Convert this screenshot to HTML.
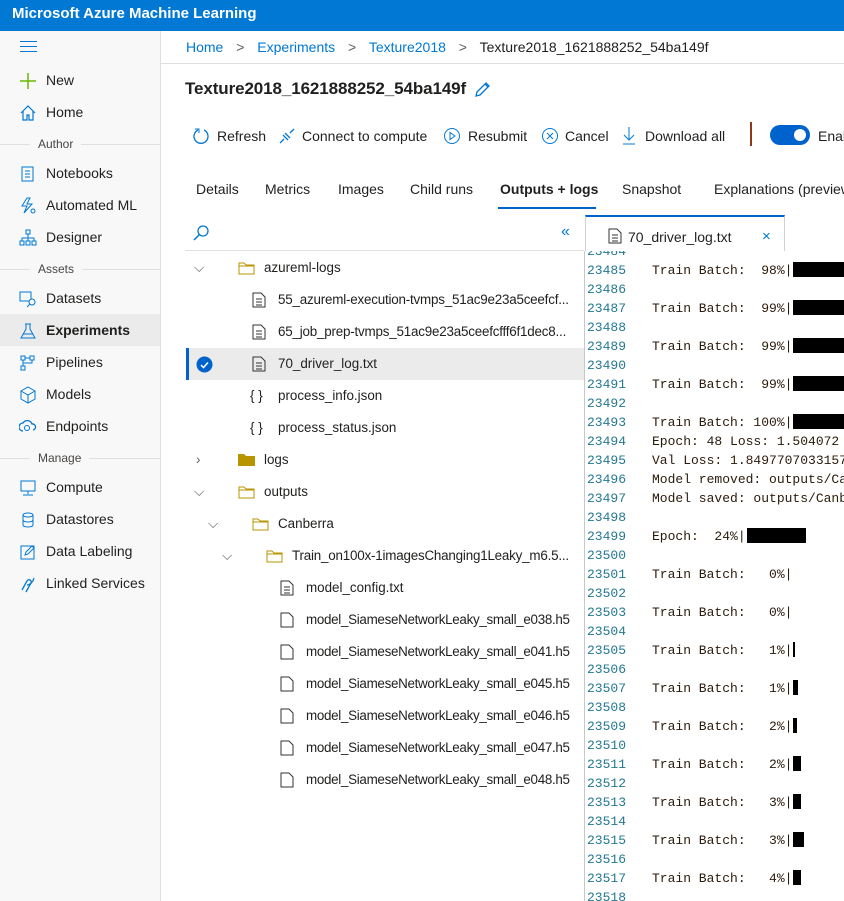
<!DOCTYPE html>
<html><head><meta charset="utf-8"><style>
*{margin:0;padding:0;box-sizing:border-box}
body{width:844px;height:901px;overflow:hidden;background:#fff;font-family:"Liberation Sans",sans-serif;font-size:14px;color:#201f1e;position:relative}
.a{position:absolute;white-space:nowrap}
.top{left:0;top:0;width:844px;height:31px;background:#0078d4;color:#fff;font-size:15px;padding:5px 12px;font-weight:bold}
.side{left:0;top:31px;width:161px;height:870px;background:#f8f8f8;border-right:1px solid #e1dfdd}
.si{left:0;width:160px;height:32px;line-height:32px;padding-left:46px}
.si svg{position:absolute;left:19px;top:8px}
.hd{left:0;width:160px;font-size:12px;color:#484644;display:flex;align-items:center;height:14px}
.hd i{flex:1;height:1px;background:#e1dfdd}
.hd span{padding:0 8px}
.tb{top:126px;height:20px;line-height:20px}
.tr{left:186px;width:398px;height:32px;line-height:32px;overflow:hidden;font-size:13.4px}
.code{left:584px;top:251px;width:260px;height:650px;overflow:hidden;border-left:1px solid #c8c8c8;font-family:"Liberation Mono",monospace;font-size:13px}
.ln{position:absolute;left:2px;height:19px;line-height:19px;color:#237893}
.tx{position:absolute;left:67px;height:19px;line-height:19px;color:#2a1a0a;white-space:pre}
.bar{display:inline-block;background:#000;height:15px;vertical-align:-3px;margin-left:1px}
</style></head><body>
<div class="a top">Microsoft Azure Machine Learning</div>
<div class="a side"></div>
<div class="a" style="left:20px;top:41px;width:17px;height:1px;background:#0078d4;box-shadow:0 5px 0 #0078d4,0 10px 0 #0078d4"></div>
<div class="a si" style="top:64px"><svg width="18" height="18"><path d="M9 1v16M1 9h16" stroke="#6bb700" stroke-width="1.5"/></svg>New</div>
<div class="a si" style="top:96px"><svg width="18" height="18"><path d="M2 9L9 2l7 7M4 7v9h4v-5h2v5h4V7" stroke="#0078d4" fill="none" stroke-width="1.2"/></svg>Home</div>
<div class="a hd" style="top:137px"><i style="flex:0 0 30px"></i><span>Author</span><i></i></div>
<div class="a si" style="top:157px"><svg width="18" height="18"><rect x="3" y="2" width="11" height="14" stroke="#0078d4" fill="none"/><path d="M6 6h5M6 9h5M6 12h5" stroke="#0078d4"/></svg>Notebooks</div>
<div class="a si" style="top:189px"><svg width="18" height="18"><path d="M8 1L3 9h5l-3 7 8-9H8l3-6z" stroke="#0078d4" fill="none"/><circle cx="14" cy="14" r="2" stroke="#0078d4" fill="none"/></svg>Automated ML</div>
<div class="a si" style="top:221px"><svg width="18" height="18"><rect x="7" y="1" width="4" height="4" stroke="#0078d4" fill="none"/><rect x="1" y="12" width="4" height="4" stroke="#0078d4" fill="none"/><rect x="7" y="12" width="4" height="4" stroke="#0078d4" fill="none"/><rect x="13" y="12" width="4" height="4" stroke="#0078d4" fill="none"/><path d="M9 5v7M3 12V9h12v3" stroke="#0078d4" fill="none"/></svg>Designer</div>
<div class="a hd" style="top:262px"><i style="flex:0 0 30px"></i><span>Assets</span><i></i></div>
<div class="a si" style="top:282px"><svg width="18" height="18"><rect x="1" y="2" width="11" height="9" stroke="#0078d4" fill="none"/><circle cx="13" cy="12" r="3" stroke="#0078d4" fill="#f8f8f8"/><path d="M11 14l-3 3" stroke="#0078d4"/></svg>Datasets</div>
<div class="a" style="left:0;top:314px;width:160px;height:32px;background:#ebebeb"></div>
<div class="a si" style="top:314px;font-weight:bold;color:#201f1e"><svg width="18" height="18"><path d="M6 2h6M7 2v5L2 16h14L11 7V2" stroke="#0078d4" fill="none"/><path d="M4 12h10" stroke="#0078d4"/></svg>Experiments</div>
<div class="a si" style="top:346px"><svg width="18" height="18"><rect x="2" y="2" width="4" height="4" stroke="#0078d4" fill="none"/><rect x="11" y="2" width="4" height="4" stroke="#0078d4" fill="none"/><rect x="2" y="12" width="4" height="4" stroke="#0078d4" fill="none"/><path d="M4 6v6M6 4h5M13 6v3H4" stroke="#0078d4" fill="none"/></svg>Pipelines</div>
<div class="a si" style="top:378px"><svg width="18" height="18"><path d="M9 1l7 4v8l-7 4-7-4V5zM2 5l7 4 7-4M9 9v8" stroke="#0078d4" fill="none"/></svg>Models</div>
<div class="a si" style="top:410px"><svg width="18" height="18"><path d="M4 13a4 4 0 010-8 5 5 0 019 1 3 3 0 011 6" stroke="#0078d4" fill="none" stroke-width="1.3"/><circle cx="8" cy="10" r="2.5" stroke="#0078d4" fill="none"/></svg>Endpoints</div>
<div class="a hd" style="top:451px"><i style="flex:0 0 30px"></i><span>Manage</span><i></i></div>
<div class="a si" style="top:471px"><svg width="18" height="18"><rect x="2" y="2" width="14" height="10" stroke="#0078d4" fill="none"/><path d="M9 12v3M4 16h10" stroke="#0078d4"/></svg>Compute</div>
<div class="a si" style="top:503px"><svg width="18" height="18"><ellipse cx="9" cy="4" rx="5" ry="2" stroke="#0078d4" fill="none"/><path d="M4 4v10c0 2.6 10 2.6 10 0V4M4 9c0 2.6 10 2.6 10 0" stroke="#0078d4" fill="none"/></svg>Datastores</div>
<div class="a si" style="top:535px"><svg width="18" height="18"><rect x="2" y="3" width="13" height="13" stroke="#0078d4" fill="none"/><path d="M6 12l1-3 6-6 2 2-6 6z" stroke="#0078d4" fill="none"/></svg>Data Labeling</div>
<div class="a si" style="top:567px"><svg width="18" height="18"><path d="M3 15l5-9a2 2 0 014 2l-5 9M8 10c3 0 6-3 7-7" stroke="#0078d4" fill="none" stroke-width="1.3"/></svg>Linked Services</div>

<div class="a" style="left:161px;top:63px;width:683px;height:1px;background:#e1dfdd"></div>
<div class="a" style="left:186px;top:39px;color:#0078d4">Home <span style="color:#605e5c;margin:0 9px">&gt;</span> Experiments <span style="color:#605e5c;margin:0 9px">&gt;</span> Texture2018 <span style="color:#605e5c;margin:0 9px">&gt;</span> <span style="color:#201f1e">Texture2018_1621888252_54ba149f</span></div>
<div class="a" style="left:185px;top:79px;font-size:17px;font-weight:bold;letter-spacing:-0.1px">Texture2018_1621888252_54ba149f</div>
<svg class="a" style="left:474px;top:80px" width="18" height="18"><path d="M2 16l1-4 9-9 3 3-9 9zM11 4l3 3" stroke="#0078d4" fill="none" stroke-width="1.3"/></svg>
<svg class="a" style="left:192px;top:127px" width="18" height="18"><path d="M6 3a7 7 0 106 0" stroke="#0078d4" fill="none" stroke-width="1.3"/><path d="M3 2h4v4" stroke="#0078d4" fill="none"/></svg>
<div class="a tb" style="left:217px">Refresh</div>
<svg class="a" style="left:278px;top:127px" width="18" height="18"><path d="M2 16l4-4M12 6l4-4M5 8l5 5M7 6l5 5" stroke="#0078d4" fill="none" stroke-width="1.3"/></svg>
<div class="a tb" style="left:302px">Connect to compute</div>
<svg class="a" style="left:443px;top:127px" width="18" height="18"><circle cx="9" cy="9" r="7.5" stroke="#0078d4" fill="none"/><path d="M7 5.5v7l5-3.5z" stroke="#0078d4" fill="none"/></svg>
<div class="a tb" style="left:468px">Resubmit</div>
<svg class="a" style="left:541px;top:127px" width="18" height="18"><circle cx="9" cy="9" r="7.5" stroke="#0078d4" fill="none"/><path d="M6 6l6 6M12 6l-6 6" stroke="#0078d4"/></svg>
<div class="a tb" style="left:565px">Cancel</div>
<svg class="a" style="left:621px;top:126px" width="16" height="20"><path d="M8 1v13M3 9l5 5 5-5M2 18h12" stroke="#0078d4" fill="none"/></svg>
<div class="a tb" style="left:645px">Download all</div>
<div class="a" style="left:750px;top:122px;width:2px;height:24px;background:#8a3a1a"></div>
<div class="a" style="left:770px;top:125px;width:40px;height:20px;border-radius:10px;background:#0062cc"></div>
<div class="a" style="left:794px;top:129px;width:12px;height:12px;border-radius:6px;background:#fff"></div>
<div class="a tb" style="left:818px">Enable</div>
<div class="a" style="left:196px;top:181px">Details</div>
<div class="a" style="left:265px;top:181px">Metrics</div>
<div class="a" style="left:338px;top:181px">Images</div>
<div class="a" style="left:410px;top:181px">Child runs</div>
<div class="a" style="left:500px;top:181px;font-weight:bold">Outputs + logs</div>
<div class="a" style="left:498px;top:207px;width:98px;height:2px;background:#0062cc"></div>
<div class="a" style="left:622px;top:181px">Snapshot</div>
<div class="a" style="left:714px;top:181px">Explanations (preview)</div>
<svg class="a" style="left:192px;top:224px" width="18" height="18"><circle cx="11" cy="7" r="5" stroke="#0078d4" fill="none" stroke-width="1.3"/><path d="M7.5 10.5L2 16" stroke="#0078d4" stroke-width="1.5"/></svg>
<div class="a" style="left:561px;top:223px;color:#0078d4;font-size:16px">«</div>
<div class="a" style="left:185px;top:250px;width:399px;height:1px;background:#e1dfdd"></div>
<div class="a" style="left:585px;top:215px;width:200px;height:36px;background:#fff;border:1px solid #d0d0d0;border-top:2px solid #0062cc;border-bottom:none"></div>
<svg class="a" style="left:608px;top:228px" width="14" height="16"><path d="M1 1h8l4 4v10H1z" stroke="#333" fill="none"/><path d="M4 7h6M4 10h6M4 13h6" stroke="#333"/></svg>
<div class="a" style="left:628px;top:229px">70_driver_log.txt</div>
<div class="a" style="left:762px;top:228px;color:#0078d4;font-size:15px">×</div>

<div class="a" style="left:186px;top:348px;width:398px;height:32px;background:#ebebeb;border-left:3px solid #0062cc"></div>
<div class="a tr" style="top:252px"><span class="a" style="left:8px;top:0;color:#605e5c">⌵</span><svg class="a" style="left:52px;top:9px" width="18" height="14"><path d="M1 2h5l2 2h8v9H1z M1 5h15" stroke="#b89500" fill="none"/></svg><span class="a" style="left:78px">azureml-logs</span></div>
<div class="a tr" style="top:284px"><svg class="a" style="left:66px;top:8px" width="14" height="16"><path d="M1 1h8l4 4v10H1z" stroke="#333" fill="none"/><path d="M4 7h6M4 10h6M4 13h6" stroke="#333"/></svg><span class="a" style="left:92px;letter-spacing:-0.2px">55_azureml-execution-tvmps_51ac9e23a5ceefcf...</span></div>
<div class="a tr" style="top:316px"><svg class="a" style="left:66px;top:8px" width="14" height="16"><path d="M1 1h8l4 4v10H1z" stroke="#333" fill="none"/><path d="M4 7h6M4 10h6M4 13h6" stroke="#333"/></svg><span class="a" style="left:92px;letter-spacing:-0.2px">65_job_prep-tvmps_51ac9e23a5ceefcfff6f1dec8...</span></div>
<div class="a tr" style="top:348px"><svg class="a" style="left:10px;top:8px" width="17" height="17"><circle cx="8.5" cy="8.5" r="8" fill="#0062cc"/><path d="M5 9l2.5 2.5L12 6.5" stroke="#fff" fill="none" stroke-width="1.5"/></svg><svg class="a" style="left:66px;top:8px" width="14" height="16"><path d="M1 1h8l4 4v10H1z" stroke="#333" fill="none"/><path d="M4 7h6M4 10h6M4 13h6" stroke="#333"/></svg><span class="a" style="left:92px">70_driver_log.txt</span></div>
<div class="a tr" style="top:380px"><span class="a" style="left:64px">{ }</span><span class="a" style="left:92px">process_info.json</span></div>
<div class="a tr" style="top:412px"><span class="a" style="left:64px">{ }</span><span class="a" style="left:92px">process_status.json</span></div>
<div class="a tr" style="top:444px"><span class="a" style="left:10px;color:#605e5c">›</span><svg class="a" style="left:52px;top:9px" width="18" height="14"><path d="M0 1h6l2 2h9v10H0z" fill="#b89500"/></svg><span class="a" style="left:78px">logs</span></div>
<div class="a tr" style="top:476px"><span class="a" style="left:8px;top:0;color:#605e5c">⌵</span><svg class="a" style="left:52px;top:9px" width="18" height="14"><path d="M1 2h5l2 2h8v9H1z M1 5h15" stroke="#b89500" fill="none"/></svg><span class="a" style="left:78px">outputs</span></div>
<div class="a tr" style="top:508px"><span class="a" style="left:22px;top:0;color:#605e5c">⌵</span><svg class="a" style="left:66px;top:9px" width="18" height="14"><path d="M1 2h5l2 2h8v9H1z M1 5h15" stroke="#b89500" fill="none"/></svg><span class="a" style="left:92px">Canberra</span></div>
<div class="a tr" style="top:540px"><span class="a" style="left:36px;top:0;color:#605e5c">⌵</span><svg class="a" style="left:80px;top:9px" width="18" height="14"><path d="M1 2h5l2 2h8v9H1z M1 5h15" stroke="#b89500" fill="none"/></svg><span class="a" style="left:106px;letter-spacing:-0.2px">Train_on100x-1imagesChanging1Leaky_m6.5...</span></div>
<div class="a tr" style="top:572px"><svg class="a" style="left:94px;top:8px" width="14" height="16"><path d="M1 1h8l4 4v10H1z" stroke="#333" fill="none"/><path d="M4 7h6M4 10h6M4 13h6" stroke="#333"/></svg><span class="a" style="left:120px">model_config.txt</span></div>
<div class="a tr" style="top:604px"><svg class="a" style="left:94px;top:8px" width="14" height="16"><path d="M1 1h8l4 4v10H1z" stroke="#333" fill="none"/></svg><span class="a" style="left:120px;letter-spacing:-0.3px">model_SiameseNetworkLeaky_small_e038.h5</span></div>
<div class="a tr" style="top:636px"><svg class="a" style="left:94px;top:8px" width="14" height="16"><path d="M1 1h8l4 4v10H1z" stroke="#333" fill="none"/></svg><span class="a" style="left:120px;letter-spacing:-0.3px">model_SiameseNetworkLeaky_small_e041.h5</span></div>
<div class="a tr" style="top:668px"><svg class="a" style="left:94px;top:8px" width="14" height="16"><path d="M1 1h8l4 4v10H1z" stroke="#333" fill="none"/></svg><span class="a" style="left:120px;letter-spacing:-0.3px">model_SiameseNetworkLeaky_small_e045.h5</span></div>
<div class="a tr" style="top:700px"><svg class="a" style="left:94px;top:8px" width="14" height="16"><path d="M1 1h8l4 4v10H1z" stroke="#333" fill="none"/></svg><span class="a" style="left:120px;letter-spacing:-0.3px">model_SiameseNetworkLeaky_small_e046.h5</span></div>
<div class="a tr" style="top:732px"><svg class="a" style="left:94px;top:8px" width="14" height="16"><path d="M1 1h8l4 4v10H1z" stroke="#333" fill="none"/></svg><span class="a" style="left:120px;letter-spacing:-0.3px">model_SiameseNetworkLeaky_small_e047.h5</span></div>
<div class="a tr" style="top:764px"><svg class="a" style="left:94px;top:8px" width="14" height="16"><path d="M1 1h8l4 4v10H1z" stroke="#333" fill="none"/></svg><span class="a" style="left:120px;letter-spacing:-0.3px">model_SiameseNetworkLeaky_small_e048.h5</span></div>

<div class="a code">
<div class="ln" style="top:-9px">23484</div>
<div class="ln" style="top:10px">23485</div><div class="tx" style="top:10px">Train Batch:  98%|<span class="bar" style="width:60px"></span></div>
<div class="ln" style="top:29px">23486</div>
<div class="ln" style="top:48px">23487</div><div class="tx" style="top:48px">Train Batch:  99%|<span class="bar" style="width:60px"></span></div>
<div class="ln" style="top:67px">23488</div>
<div class="ln" style="top:86px">23489</div><div class="tx" style="top:86px">Train Batch:  99%|<span class="bar" style="width:60px"></span></div>
<div class="ln" style="top:105px">23490</div>
<div class="ln" style="top:124px">23491</div><div class="tx" style="top:124px">Train Batch:  99%|<span class="bar" style="width:60px"></span></div>
<div class="ln" style="top:143px">23492</div>
<div class="ln" style="top:162px">23493</div><div class="tx" style="top:162px">Train Batch: 100%|<span class="bar" style="width:60px"></span></div>
<div class="ln" style="top:181px">23494</div><div class="tx" style="top:181px">Epoch: 48 Loss: 1.504072</div>
<div class="ln" style="top:200px">23495</div><div class="tx" style="top:200px">Val Loss: 1.8497707033157</div>
<div class="ln" style="top:219px">23496</div><div class="tx" style="top:219px">Model removed: outputs/Canberra</div>
<div class="ln" style="top:238px">23497</div><div class="tx" style="top:238px">Model saved: outputs/Canberra</div>
<div class="ln" style="top:257px">23498</div>
<div class="ln" style="top:276px">23499</div><div class="tx" style="top:276px">Epoch:  24%|<span class="bar" style="width:59px"></span></div>
<div class="ln" style="top:295px">23500</div>
<div class="ln" style="top:314px">23501</div><div class="tx" style="top:314px">Train Batch:   0%|</div>
<div class="ln" style="top:333px">23502</div>
<div class="ln" style="top:352px">23503</div><div class="tx" style="top:352px">Train Batch:   0%|</div>
<div class="ln" style="top:371px">23504</div>
<div class="ln" style="top:390px">23505</div><div class="tx" style="top:390px">Train Batch:   1%|<span class="bar" style="width:2px"></span></div>
<div class="ln" style="top:409px">23506</div>
<div class="ln" style="top:428px">23507</div><div class="tx" style="top:428px">Train Batch:   1%|<span class="bar" style="width:5px"></span></div>
<div class="ln" style="top:447px">23508</div>
<div class="ln" style="top:466px">23509</div><div class="tx" style="top:466px">Train Batch:   2%|<span class="bar" style="width:4px"></span></div>
<div class="ln" style="top:485px">23510</div>
<div class="ln" style="top:504px">23511</div><div class="tx" style="top:504px">Train Batch:   2%|<span class="bar" style="width:8px"></span></div>
<div class="ln" style="top:523px">23512</div>
<div class="ln" style="top:542px">23513</div><div class="tx" style="top:542px">Train Batch:   3%|<span class="bar" style="width:8px"></span></div>
<div class="ln" style="top:561px">23514</div>
<div class="ln" style="top:580px">23515</div><div class="tx" style="top:580px">Train Batch:   3%|<span class="bar" style="width:11px"></span></div>
<div class="ln" style="top:599px">23516</div>
<div class="ln" style="top:618px">23517</div><div class="tx" style="top:618px">Train Batch:   4%|<span class="bar" style="width:8px"></span></div>
<div class="ln" style="top:637px">23518</div>
</div>
</body></html>
